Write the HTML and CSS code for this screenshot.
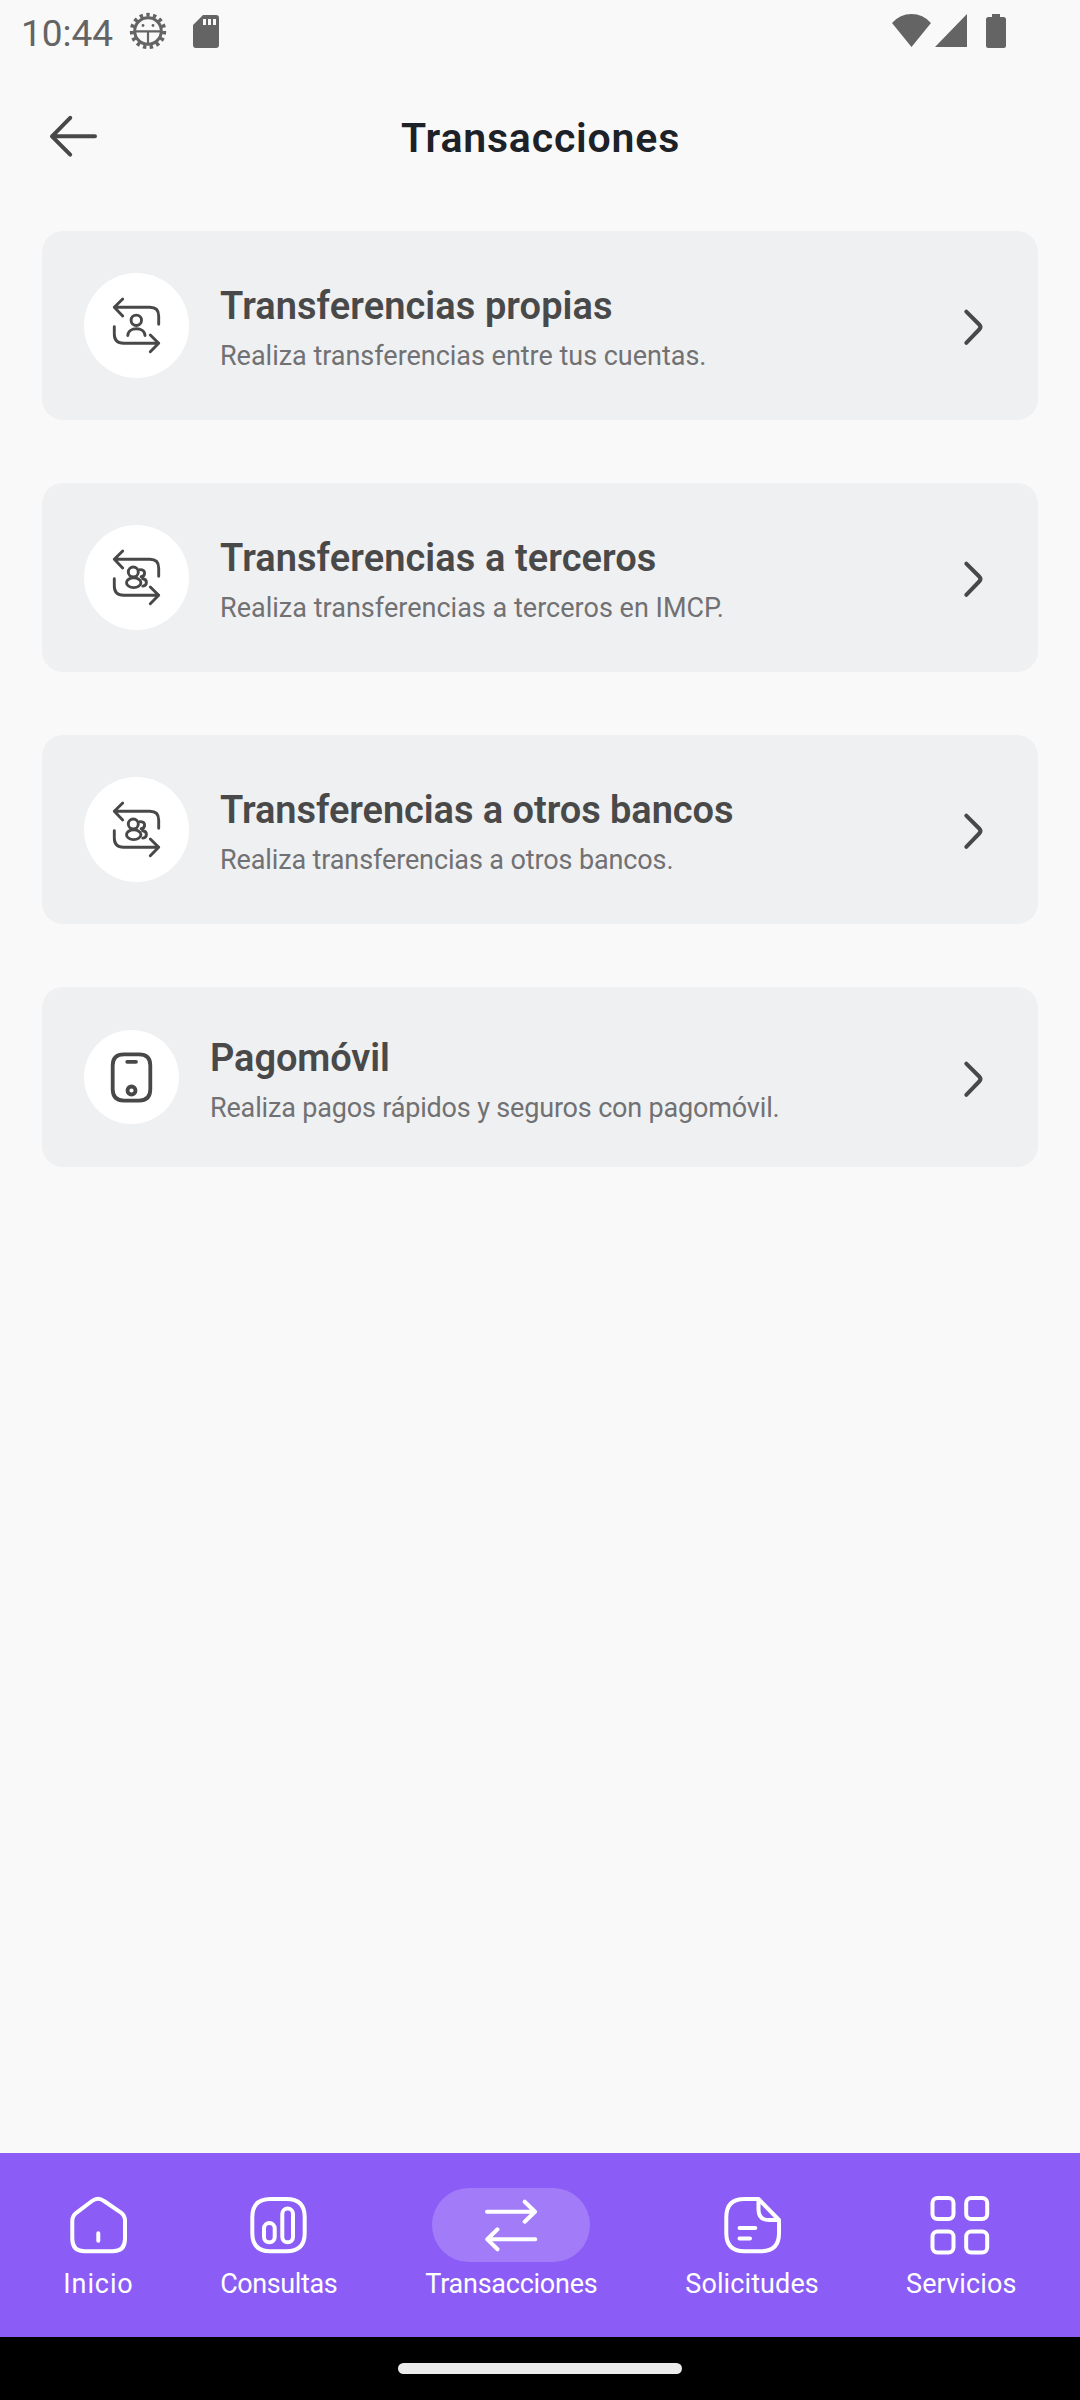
FILE: index.html
```html
<!DOCTYPE html>
<html lang="es">
<head>
<meta charset="utf-8">
<title>Transacciones</title>
<link rel="stylesheet" href="styles.css">
</head>
<body>
<svg class="defs" width="0" height="0" aria-hidden="true">
  <symbol id="swap" viewBox="0 0 63 63">
    <path d="M17.7 5 9.3 13.3l8.4 8.7M9.3 13.3H45q8.7 0 8.7 8.7v8.3M9.3 32.7V40q0 9.3 9.3 9.3h35.1M45.3 41l8.4 8.3-8.4 8.4"/>
  </symbol>
  <symbol id="users" viewBox="0 0 63 63">
    <circle cx="28.3" cy="26" r="5"/><ellipse cx="28.7" cy="36.7" rx="7.2" ry="4.9"/>
    <path d="M34.9 23.6c2.900 0 4.700 1.300 4.700 3.500 0 2.200-1.500 3.500-3.500 3.600M37.600 32.800c2.400.2 3.800 1.700 3.800 3.600 0 2.100-1.400 3.400-3.600 3.700"/>
  </symbol>
  <symbol id="chevron" viewBox="0 0 24 42"><path d="m5.3 5.7 12.9 12.8q2.5 2.5 0 5L5.3 36.8"/></symbol>
</svg>
<div class="screen">
  <div class="status">
    <span class="time">10:44</span>
    <svg class="gear" viewBox="0 0 40 40">
      <circle class="teeth" cx="20" cy="20" r="16.200" pathLength="150"/>
      <circle class="ring" cx="20" cy="20" r="13.300"/>
      <path class="ring thin" d="M7 20.300h26M20 20v13"/>
      <circle cx="15" cy="14.500" r="1.400"/><circle cx="25" cy="14.500" r="1.400"/>
    </svg>
    <svg class="sd" viewBox="0 0 26 33"><path fill-rule="evenodd" d="M10 0h13q3 0 3 3v27q0 3-3 3H3q-3 0-3-3V10zM10 4v6h3V4zm5 0v6h3V4zm5 0v6h3V4z"/></svg>
    <svg class="signals" viewBox="0 0 115 34">
      <path d="M0 9Q8 0 19.500 0T39 9L19.500 33zM43 33 75 0v33zM100 0h8v3h3.500q2.500 0 2.500 2.500v26q0 2.500-2.500 2.500h-15Q94 34 94 31.500v-26Q94 3 96.500 3h3.500z"/>
    </svg>
  </div>
  <header class="header">
    <svg class="back" viewBox="0 0 63 63"><path d="M27.200 12.800 9 31.300l18.200 18.400M9 31.300h43"/></svg>
    <h1>Transacciones</h1>
  </header>
  <main class="list">
    <section class="card">
      <div class="badge"><svg class="icon" viewBox="0 0 63 63"><use href="#swap"/><circle cx="31.300" cy="26.300" r="5.200"/><path d="M22.800 41.500c.5-9 16.700-9 17.200 0"/></svg></div>
      <div class="copy"><h2 class="propias">Transferencias propias</h2><p>Realiza transferencias entre tus cuentas.</p></div>
      <svg class="chev"><use href="#chevron"/></svg>
    </section>
    <section class="card">
      <div class="badge"><svg class="icon" viewBox="0 0 63 63"><use href="#swap"/><use href="#users"/></svg></div>
      <div class="copy"><h2 class="propias">Transferencias a terceros</h2><p class="terceros">Realiza transferencias a terceros en IMCP.</p></div>
      <svg class="chev"><use href="#chevron"/></svg>
    </section>
    <section class="card">
      <div class="badge"><svg class="icon" viewBox="0 0 63 63"><use href="#swap"/><use href="#users"/></svg></div>
      <div class="copy"><h2 class="otros">Transferencias a otros bancos</h2><p class="tight">Realiza transferencias a otros bancos.</p></div>
      <svg class="chev"><use href="#chevron"/></svg>
    </section>
    <section class="card card-small">
      <div class="badge"><svg class="icon bold" viewBox="0 0 63 63"><path d="M24 8.300h15q11.300 0 11.300 11v24q0 11.300-11.300 11.300H24q-11.300 0-11.300-11.300v-24q0-11 11.300-11zM27.200 15.800h8.800"/><circle cx="31.500" cy="44.500" r="4"/></svg></div>
      <div class="copy"><h2 class="pago">Pagomóvil</h2><p class="tighter">Realiza pagos rápidos y seguros con pagomóvil.</p></div>
      <svg class="chev"><use href="#chevron"/></svg>
    </section>
  </main>
  <nav class="nav">
    <a class="item inicio"><span class="pill"><svg viewBox="0 0 63 63"><path d="M25 7q6-4.400 12 0l17 11.600q4 3 4 8.200v18q0 12.500-12.400 12.500H17.700Q5.300 57.300 5.300 44.800v-18q0-5 4-8zM31.300 39.300v7.400"/></svg></span><span class="label">Inicio</span></a>
    <a class="item consultas"><span class="pill"><svg viewBox="0 0 63 63"><path d="M23.500 5h16Q57.700 5 57.700 23v16.300q0 18-18.200 18h-16q-18.200 0-18.200-18V23Q5.300 5 23.500 5z"/><rect x="17" y="29" width="10.700" height="19.300" rx="5.350"/><rect x="35.300" y="14.500" width="10.700" height="33.800" rx="5.350"/></svg></span><span class="label">Consultas</span></a>
    <a class="item active transacciones"><span class="pill"><svg viewBox="0 0 63 63"><path d="M7 17.700h48M44.700 7.700l10.300 10-10.300 10M55.300 45.300H7.500M17.500 35.300 7.300 45.300l10.200 10"/></svg></span><span class="label">Transacciones</span></a>
    <a class="item solicitudes"><span class="pill"><svg viewBox="0 0 63 63"><path d="M37.500 5H23.500Q5.300 5 5.300 23v16.300q0 18 18 18h16.500q18.200 0 18.200-18V26L37.500 5zM37.500 5v10.500Q37.500 26 48 26h10M18.500 34h15.800M18.500 44.600H29"/></svg></span><span class="label">Solicitudes</span></a>
    <a class="item servicios"><span class="pill"><svg viewBox="0 0 63 63"><rect x="2.500" y="4" width="21" height="21" rx="5"/><rect x="36.200" y="4" width="21" height="21" rx="5"/><rect x="2.500" y="37.500" width="21" height="21" rx="5"/><rect x="36.200" y="37.500" width="21" height="21" rx="5"/></svg></span><span class="label">Servicios</span></a>
  </nav>
  <div class="gesture"><div class="handle"></div></div>
</div>
</body>
</html>
```
FILE: styles.css
```css
* { box-sizing: border-box; }
body { margin: 0; background: #f9f9f9; font-family: Roboto, "Noto Sans", sans-serif; }
h1, h2, p { margin: 0; white-space: nowrap; }
svg { display: block; flex: none; fill: none; stroke-linecap: round; stroke-linejoin: round; }
.defs { position: absolute; }
.screen { width: 1080px; height: 2400px; display: flex; flex-direction: column; }

.status { height: 63px; padding: 11px 73px 0 21px; display: flex; align-items: flex-start; color: #646464; }
.status svg { fill: #646464; }
.time { width: 107px; font-size: 37px; line-height: 46px; }
.gear { width: 40px; height: 40px; }
.status .teeth { fill: none; stroke: #646464; stroke-width: 4; stroke-dasharray: 5 5; stroke-linecap: butt; }
.status .ring { fill: none; stroke: #646464; stroke-width: 3; }
.status .thin { stroke-width: 2.2; stroke-linecap: butt; }
.sd { width: 26px; height: 33px; margin: 4px 0 0 25px; }
.signals { width: 115px; height: 34px; margin: 3px 0 0 auto; }

.header { height: 168px; padding-left: 43px; display: grid; grid-template-columns: 63px 1fr 105px; align-items: start; }
.back { width: 63px; height: 63px; margin-top: 42px; stroke: #484848; stroke-width: 4; }
h1 { margin-top: 50px; color: #1d2229; font-size: 41px; line-height: 50px; font-weight: 600; letter-spacing: .82px; text-align: center; }

.list { flex: 1; padding: 0 42px; display: flex; flex-direction: column; gap: 63px; }
.card { height: 189px; padding: 42px 53px 0 42px; display: flex; align-items: flex-start; border-radius: 21px; background: #eff0f2; }
.card-small { height: 180px; }
.badge { width: 105px; height: 105px; flex: none; display: flex; justify-content: center; align-items: center; border-radius: 50%; background: #fff; }
.card-small .badge { width: 95px; height: 94px; margin-top: 1px; }
.icon { width: 63px; height: 63px; stroke: #484848; stroke-width: 2.9; }
.bold { stroke-width: 3.8; }
.copy { flex: 1; margin: 8px 0 0 31px; display: flex; flex-direction: column; gap: 7px; }
.card-small .copy { margin-top: 4px; }
.copy h2 { color: #494949; font-size: 38px; line-height: 50px; font-weight: 600; }
.copy p { color: #717173; font-size: 27px; line-height: 36px; letter-spacing: -.02px; }
.copy .propias { letter-spacing: .07px; }
.copy .otros { letter-spacing: -.07px; }
.copy .pago { letter-spacing: -.1px; }
.copy .terceros { letter-spacing: .02px; }
.copy .tight { letter-spacing: -.12px; }
.copy .tighter { letter-spacing: -.17px; }
.chev { width: 24px; height: 42px; margin-top: 33px; stroke: #484848; stroke-width: 4; }
.card-small .chev { margin-top: 29px; }

.nav { height: 184px; padding: 35px 0 0 65px; display: grid; grid-template-columns: 67px 116px 172px 132px 109px; column-gap: 88.7px; align-items: start; background: #8b5cf6; color: #fff; }
.item { display: flex; flex-direction: column; align-items: center; gap: 4px; }
.pill { width: 63px; height: 74px; display: flex; align-items: center; justify-content: center; border-radius: 37px; }
.active .pill { width: 158px; background: #a27bf9; }
.pill svg { width: 63px; height: 63px; stroke: #fff; stroke-width: 4; }
.label { font-size: 27px; line-height: 36px; white-space: nowrap; }
.inicio .label { letter-spacing: .9px; }
.consultas .label { letter-spacing: -.41px; }
.transacciones .label { letter-spacing: -.25px; }
.solicitudes .label { letter-spacing: .1px; }
.servicios .label { letter-spacing: .12px; }

.gesture { height: 63px; padding-top: 26px; background: #000; }
.handle { width: 284px; height: 11px; margin: 0 auto; border-radius: 6px; background: #ebebeb; }
```
